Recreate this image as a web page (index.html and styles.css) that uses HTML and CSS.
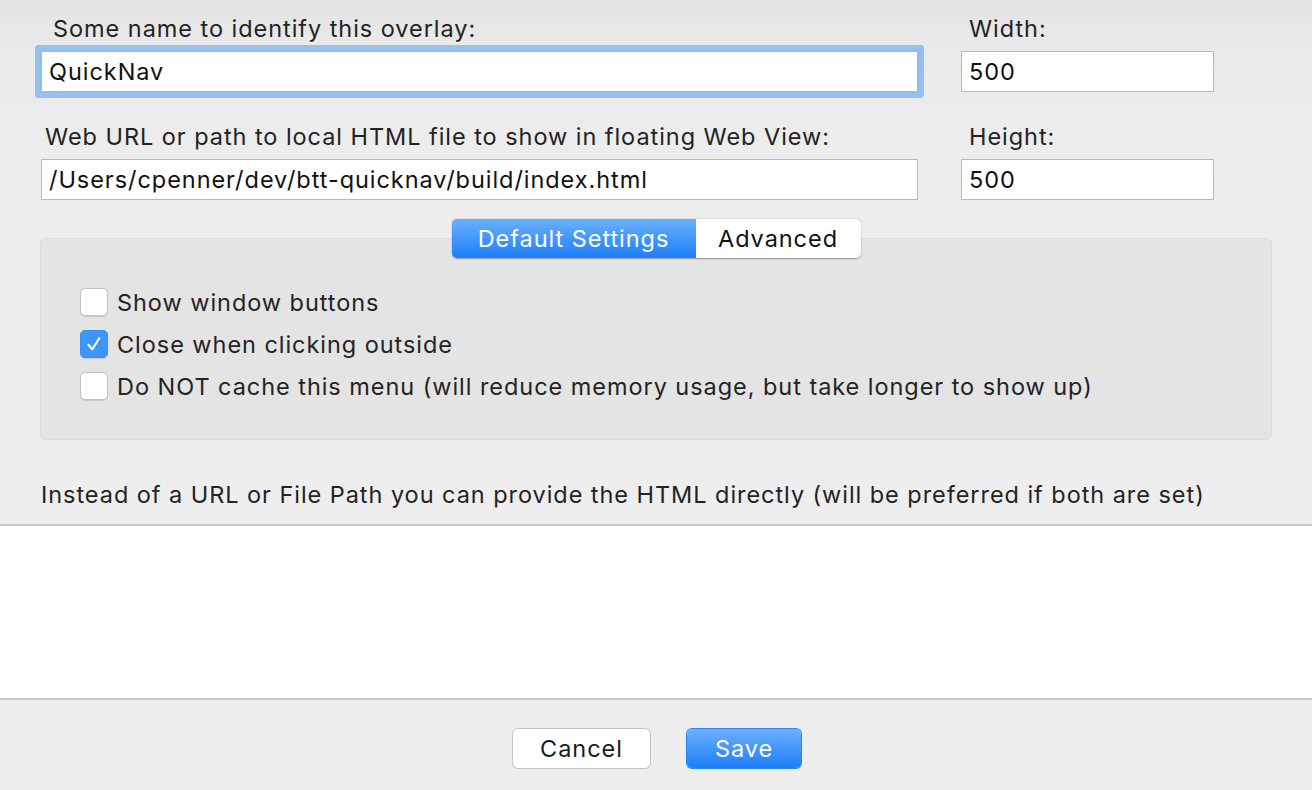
FILE: index.html
```html
<!DOCTYPE html>
<html>
<head>
<meta charset="utf-8">
<link rel="stylesheet" href="styles.css">
</head>
<body>
<div class="window">
  <div class="top">
    <div class="fields">
      <div class="field main">
        <label class="lbl lbl-first">Some name to identify this overlay:</label>
        <div class="input focused">QuickNav</div>
      </div>
      <div class="field side">
        <label class="lbl lbl-side">Width:</label>
        <div class="input">500</div>
      </div>
      <div class="field main">
        <label class="lbl lbl-second">Web URL or path to local HTML file to show in floating Web View:</label>
        <div class="input">/Users/cpenner/dev/btt-quicknav/build/index.html</div>
      </div>
      <div class="field side">
        <label class="lbl lbl-side">Height:</label>
        <div class="input">500</div>
      </div>
    </div>
    <div class="tabs-wrap">
      <div class="tabs">
        <div class="tab active">Default Settings</div>
        <div class="tab">Advanced</div>
      </div>
    </div>
    <div class="group">
      <div class="check-row"><span class="box"></span><span>Show window buttons</span></div>
      <div class="check-row"><span class="box checked"><svg width="20" height="20" viewBox="0 0 20 20"><path d="M4.5 10.8 L8.3 15.2 L15.3 4.2" fill="none" stroke="#fff" stroke-width="2.1" stroke-linecap="round" stroke-linejoin="round"/></svg></span><span>Close when clicking outside</span></div>
      <div class="check-row"><span class="box"></span><span>Do NOT cache this menu (will reduce memory usage, but take longer to show up)</span></div>
    </div>
    <p class="hint">Instead of a URL or File Path you can provide the HTML directly (will be preferred if both are set)</p>
  </div>
  <div class="editor"></div>
  <div class="footer">
    <button class="btn">Cancel</button>
    <button class="btn primary">Save</button>
  </div>
</div>
</body>
</html>
```
FILE: styles.css
```css
* { box-sizing: border-box; }
html, body { margin: 0; padding: 0; }
body {
  width: 1312px;
  height: 790px;
  overflow: hidden;
  font-family: Inter, "Liberation Sans", Arial, sans-serif;
  font-size: 23.5px;
  letter-spacing: 0.95px;
  color: #232323;
}
.window {
  display: flex;
  flex-direction: column;
  height: 790px;
}
.top {
  background: linear-gradient(#e2e2e2 0px, #e9e9e9 40px, #ededed 160px, #eeeeee 100%);
  padding: 15px 0 0 0;
  height: 526px;
  border-bottom: 2px solid #c9c9c9;
}
.fields {
  display: grid;
  grid-template-columns: 877px 253px;
  column-gap: 43px;
  row-gap: 31px;
  padding-left: 41px;
}
.field { display: flex; flex-direction: column; }
.lbl {
  display: block;
  line-height: 28px;
  height: 29px;
  white-space: nowrap;
}
.lbl-first { padding-left: 12px; }
.lbl-second { padding-left: 4px; }
.lbl-side { padding-left: 8px; }
.input {
  height: 41px;
  margin-top: 7px;
  background: #fff;
  border: 1px solid #b8b8b8;
  padding: 0 7px;
  line-height: 40px;
  color: #111;
  white-space: nowrap;
  overflow: hidden;
}
.input.focused {
  box-shadow: 0 0 0 1px #8fb9ea, 0 0 0 6px #96c1ef;
  border-radius: 1px;
}
.tabs-wrap {
  display: flex;
  justify-content: center;
  margin-top: 19px;
  position: relative;
  z-index: 2;
}
.tabs {
  display: flex;
  height: 39px;
  border-radius: 5px;
  box-shadow: 0 0.5px 1.5px rgba(0,0,0,0.35);
  overflow: hidden;
  background: #fff;
}
.tab {
  line-height: 39px;
  color: #111;
  width: 165px;
  text-align: center;
}
.tab.active {
  width: 244px;
  color: #fff;
  background: linear-gradient(#6cb0fc, #1c7ef8);
}
.group {
  margin: -20px 40px 0 40px;
  height: 202px;
  background: #e4e4e4;
  border: 1px solid #dcdcdc;
  border-radius: 6px;
  padding: 49px 0 0 39px;
  display: flex;
  flex-direction: column;
  gap: 14px;
}
.check-row {
  display: flex;
  align-items: center;
  gap: 9px;
  height: 28px;
  white-space: nowrap;
}
.box {
  width: 28px;
  height: 28px;
  border-radius: 5px;
  background: #fff;
  border: 1px solid #c2c2c2;
  box-shadow: 0 0.5px 1px rgba(0,0,0,0.12);
  display: flex;
  align-items: center;
  justify-content: center;
  flex: none;
}
.box.checked {
  background: #3d96f8;
  border-color: #3a8ff2;
}
.hint {
  margin: 41px 0 0 41px;
  line-height: 28px;
  white-space: nowrap;
}
.editor {
  height: 174px;
  background: #fff;
  border-bottom: 2px solid #c9c9c9;
}
.footer {
  flex: 1;
  background: #eeeeee;
  display: flex;
  justify-content: center;
  align-items: flex-start;
  gap: 37px;
  padding-top: 29px;
  padding-left: 2px;
}
.btn {
  font-family: Inter, "Liberation Sans", Arial, sans-serif;
  font-size: 23.5px;
  letter-spacing: 0.95px;
  height: 39px;
  border-radius: 5px;
  border: none;
  background: #fff;
  color: #1a1a1a;
  box-shadow: 0 0 0 1px #c4c4c4, 0 1px 1px rgba(0,0,0,0.15);
  width: 137px;
  padding: 0;
}
.btn.primary {
  width: 114px;
  color: #fff;
  background: linear-gradient(#6cb0fc, #1c7ef8);
  box-shadow: 0 0 0 1px #2a86f5;
}
```
